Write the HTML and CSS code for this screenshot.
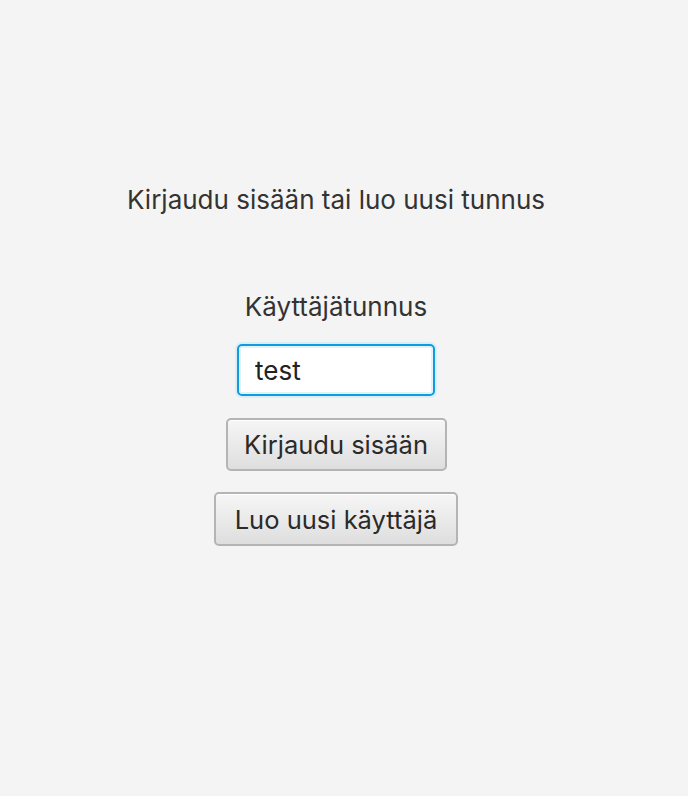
FILE: index.html
```html
<!DOCTYPE html>
<html lang="fi">
<head>
<meta charset="utf-8">
<title>Kirjaudu</title>
<link rel="stylesheet" href="styles.css">
</head>
<body>
<main class="page">
  <h1 class="title">Kirjaudu sisään tai luo uusi tunnus</h1>
  <label class="label" for="user">Käyttäjätunnus</label>
  <input class="field" id="user" type="text" value="test">
  <button class="btn btn-login" type="button">Kirjaudu sisään</button>
  <button class="btn btn-new" type="button">Luo uusi käyttäjä</button>
</main>
</body>
</html>
```
FILE: styles.css
```css
html, body {
  margin: 0;
  padding: 0;
  background: #f4f4f4;
}
body {
  width: 688px;
  height: 796px;
  overflow: hidden;
  font-family: Inter, "Liberation Sans", sans-serif;
  color: #333333;
}
.page {
  width: 672px;
  display: flex;
  flex-direction: column;
  align-items: center;
  padding-top: 184px;
}
.title {
  margin: 0;
  font-size: 26px;
  font-weight: 400;
  line-height: 32px;
  height: 32px;
}
.label {
  margin-top: 75px;
  font-size: 26px;
  line-height: 32px;
}
.field {
  margin-top: 21px;
  box-sizing: border-box;
  width: 198px;
  height: 52px;
  padding: 0 16px;
  font-family: inherit;
  font-size: 26px;
  color: #222;
  background: #fff;
  border: 2px solid #0e9ddb;
  border-radius: 5px;
  box-shadow: 0 0 0 2px #dbeef8, inset 0 0 0 2px #e2f1fa;
  outline: none;
}
.btn {
  box-sizing: border-box;
  height: 53px;
  font-family: inherit;
  font-size: 25.5px;
  color: #2a2a2a;
  border: 2px solid #b4b4b4;
  border-radius: 5px;
  background: linear-gradient(#f6f6f6, #dedede);
  box-shadow: inset 0 1px 0 #ffffff;
  padding: 0;
}
.btn-login {
  margin-top: 22px;
  width: 221px;
}
.btn-new {
  margin-top: 21px;
  width: 244px;
  height: 54px;
}
```
